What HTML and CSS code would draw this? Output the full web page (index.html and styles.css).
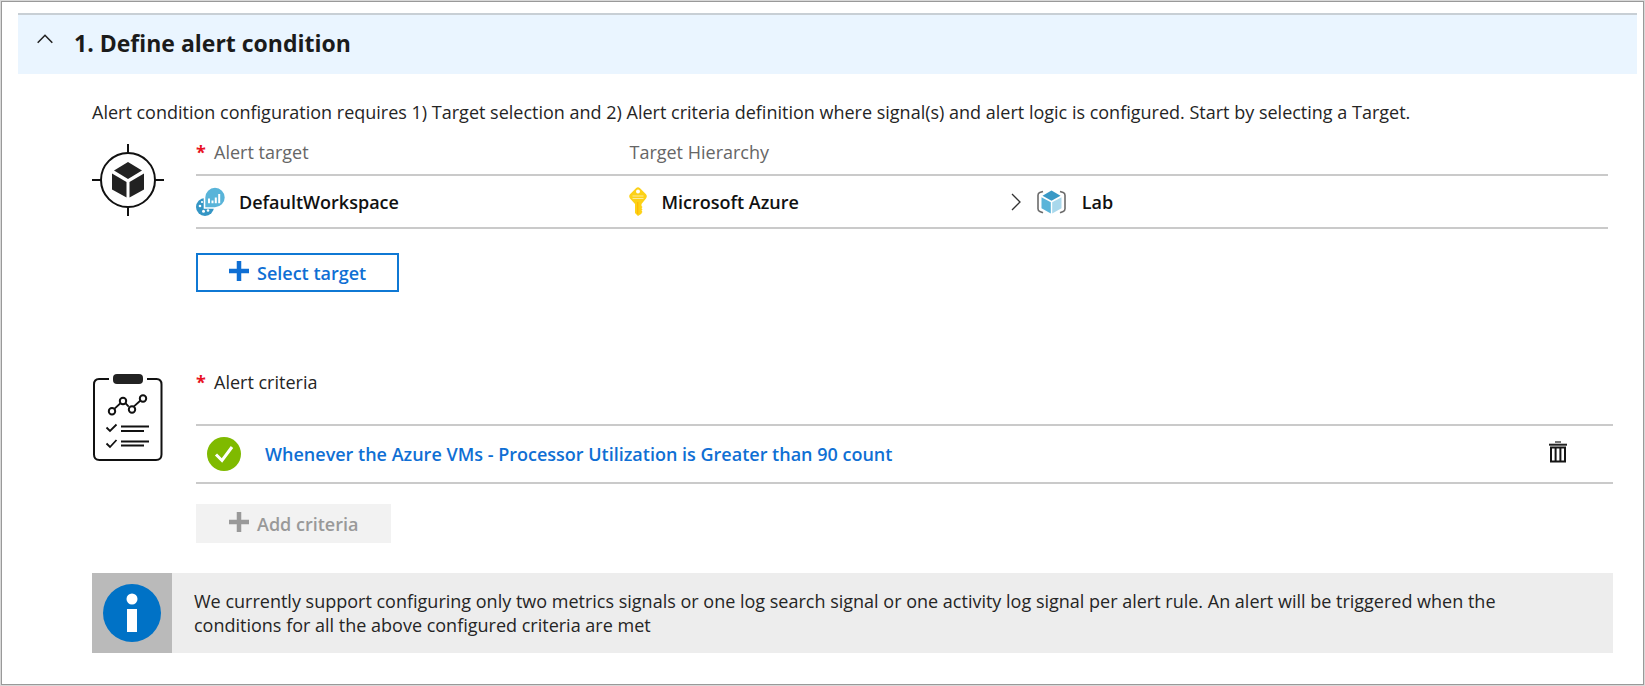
FILE: index.html
```
<!DOCTYPE html>
<html lang="en">
<head>
<meta charset="utf-8">
<title>Define alert condition</title>
<link rel="stylesheet" href="styles.css">
</head>
<body>
<main class="panel">
  <header class="step-header">
    <button class="toggle" type="button" aria-label="Collapse section" aria-expanded="true">
      <svg width="16" height="10" viewBox="0 0 16 10" fill="none" stroke="#222" stroke-width="1.6"><path d="M.7 8.8 8 1.3l7.3 7.5"/></svg>
    </button>
    <h1 class="step-title">1. Define alert condition</h1>
  </header>
  <div class="content">
    <p class="intro">Alert condition configuration requires 1) Target selection and 2) Alert criteria definition where signal(s) and alert logic is configured. Start by selecting a Target.</p>

    <section class="block">
      <svg class="block-icon" width="72" height="72" viewBox="0 0 72 72">
        <g fill="none" stroke="#111" stroke-width="2"><circle cx="36" cy="36" r="27"/><path d="M0 36h9M63 36h9M36 0v9M36 63v9"/></g>
        <g fill="#222"><path d="M36 18 50 26.5 36 35 22 26.5z"/><path d="M20 29.5 34.5 38v15.500L20 45.500z"/><path d="M52 29.500 37.500 38v15.500L52 45.500z"/></g>
      </svg>
      <div class="block-body target-body">
        <table class="target-table">
          <colgroup><col class="col-target"><col class="col-azure"><col></colgroup>
          <thead>
            <tr><th scope="col"><span class="required">*</span>Alert target</th><th scope="col" colspan="2">Target Hierarchy</th></tr>
          </thead>
          <tbody>
            <tr>
              <td>
                <div class="cell workspace">
                  <svg width="29" height="29" viewBox="0 0 29 29">
                    <circle cx="9" cy="20" r="9" fill="#3596c5"/>
                    <g fill="#fff"><circle cx="4" cy="19" r="1.300"/><circle cx="7.500" cy="24.300" r="1.500"/><circle cx="12" cy="23.500" r="1.300"/><circle cx="6" cy="15" r="1.100"/></g>
                    <path d="M8.500 21V10.500A10.500 10.500 0 1 1 19 21z" fill="#59b4d9" stroke="#fff" stroke-width="1.600"/>
                    <path d="M13 11.500v4.800M16.500 13.500v2.800M19.800 10.500v5.800M23.200 7v9.300" stroke="#fff" stroke-width="2"/>
                  </svg>
                  <span>DefaultWorkspace</span>
                </div>
              </td>
              <td>
                <div class="cell azure">
                  <svg width="18" height="29" viewBox="0 0 18 29">
                    <path d="M7.200 1Q9-.6 10.800 1L17 7.200Q18.600 9 17 11.500L12.500 17v2l1 1-1 1.200 1 1.200-1 1.200 1 1.300-1 1.200v.700L9 29 6 26V17L1 11.500Q-.6 9 1 7.200z" fill="#fcd116"/>
                    <circle cx="9" cy="4.500" r="2" fill="#fff"/><path d="M3.500 9h11M3.500 11.500h11" stroke="#fdeb9b" stroke-width="1"/><path d="M8.700 15v12" stroke="#ffb900" stroke-width="1.200"/>
                  </svg>
                  <span>Microsoft Azure</span>
                </div>
              </td>
              <td>
                <div class="cell lab">
                  <svg width="10" height="18" viewBox="0 0 10 18" fill="none" stroke="#333" stroke-width="1.300"><path d="M1 1l8 8-8 8"/></svg>
                  <svg width="29" height="24" viewBox="0 0 29 24">
                    <path d="M6 1.500 2.800 2.600Q1 3.300 1 5.300V18.700Q1 20.700 2.800 21.400L6 22.800M23 1.500l3.200 1.100Q28 3.300 28 5.300V18.700Q28 20.700 26.200 21.400L23 22.800" fill="none" stroke="#6b6b6b" stroke-width="1.600"/>
                    <path d="M14.500.5 23.500 5.700 14.500 10.800 5.500 5.700z" fill="#3999c6"/><path d="M4.500 7.200 13.800 12.300V23.500L4.500 18.300z" fill="#59b4d9"/><path d="M24.500 7.200 15.200 12.300V23.500L24.500 18.300z" fill="#a9d8ec"/>
                  </svg>
                  <span>Lab</span>
                </div>
              </td>
            </tr>
          </tbody>
        </table>
        <button class="action action-select" type="button">
          <svg class="plus" width="20" height="20" viewBox="0 0 20 20" stroke="currentColor" stroke-width="4.500"><path d="M10 0v20M0 10h20"/></svg>
          Select target
        </button>
      </div>
    </section>

    <section class="block criteria">
      <svg class="block-icon" width="72" height="90" viewBox="0 0 72 90" fill="none" stroke="#111" stroke-width="2">
        <path d="M17 5H7Q2 5 2 10.500v70q0 5.500 5.500 5.500h56.500Q69.500 86 69.500 80.500V10.500q0-5.500-5-5.500H55"/>
        <rect x="21" y="0" width="30" height="10" rx="4" fill="#222" stroke="none"/>
        <path d="M22.300 34.800 28.700 29M33.200 28.800 36.700 32.700M41.700 32.700 48.500 26.500" stroke-width="1.800"/>
        <circle cx="20" cy="37.300" r="3.200"/><circle cx="31" cy="27" r="3.200"/><circle cx="40" cy="35.500" r="3.200"/><circle cx="51" cy="24.500" r="3.200"/>
        <path d="M29 52.500h28M29 57h23M29 67.500h28M29 71.500h23"/>
        <path d="M14.500 53.500l3.500 3.500 6.500-6.500M14.500 69.500l3.500 3.500 6.500-7" stroke-width="1.800"/>
      </svg>
      <div class="block-body">
        <h2 class="criteria-title"><span class="required">*</span>Alert criteria</h2>
        <div class="criteria-row">
          <svg width="34" height="34" viewBox="0 0 34 34"><circle cx="17" cy="17" r="17" fill="#7fba00"/><path d="M9 17.500l6 6 10-13.500" fill="none" stroke="#fff" stroke-width="3"/></svg>
          <a class="criteria-link" href="#">Whenever the Azure VMs - Processor Utilization is Greater than 90 count</a>
          <button class="delete" type="button" aria-label="Delete criteria">
            <svg width="18" height="22" viewBox="0 0 18 22"><path d="M6 1h6" stroke="#777" stroke-width="2"/><path d="M0 3.700h18" stroke="#222" stroke-width="2"/><path d="M2 6.500h14v14H2zM6.600 6v15M11.400 6v15" fill="none" stroke="#151515" stroke-width="2"/></svg>
          </button>
        </div>
        <button class="action action-add" type="button" disabled>
          <svg class="plus" width="20" height="20" viewBox="0 0 20 20" stroke="currentColor" stroke-width="4.500"><path d="M10 0v20M0 10h20"/></svg>
          Add criteria
        </button>
      </div>
    </section>

    <aside class="notice">
      <div class="notice-icon">
        <svg width="58" height="58" viewBox="0 0 58 58"><circle cx="29" cy="29" r="29" fill="#0072c6"/><circle cx="29" cy="15" r="5.500" fill="#fff"/><path d="M24 25h10v23H24z" fill="#fff"/></svg>
      </div>
      <p class="notice-text">We currently support configuring only two metrics signals or one log search signal or one activity log signal per alert rule. An alert will be triggered when the conditions for all the above configured criteria are met</p>
    </aside>
  </div>
</main>
</body>
</html>
```
FILE: styles.css
```
* { box-sizing: border-box; }
body {
  margin: 0;
  padding: 1px;
  background: #fff;
  color: #252525;
  font-family: "Open Sans", "Noto Sans", sans-serif;
  font-size: 18px;
  line-height: 24px;
}
h1, h2, p { margin: 0; }
svg { display: block; flex: none; }
button { font: inherit; cursor: pointer; }
.panel {
  border: 1px solid #999;
  box-shadow: 0 0 0 1px #d8d8d8;
  padding: 11px 6px 31px 16px;
}
.step-header {
  display: flex;
  align-items: center;
  gap: 21px;
  height: 61px;
  padding: 0 19px 4px;
  border-top: 2px solid #c8cfd5;
  background: #eaf5ff;
}
.toggle {
  padding: 0 0 8px;
  border: 0;
  background: none;
}
.step-title {
  color: #1b1b1b;
  font-size: 23px;
  line-height: 32px;
  font-weight: 700;
}
.content { padding: 26px 24px 0 74px; }
.intro { margin-bottom: 16px; }
.block { display: flex; gap: 32px; }
.block-icon { margin-top: 4px; }
.block-body { flex: 1; min-width: 0; }
.target-body { padding-right: 5px; }
.target-table {
  width: 100%;
  border-collapse: collapse;
  table-layout: fixed;
}
.col-target { width: 30.7%; }
.col-azure { width: 27%; }
.target-table th {
  padding: 0 0 10px;
  color: #666;
  font-weight: 400;
  text-align: left;
}
.target-table td {
  height: 53px;
  padding: 0;
  border-top: 2px solid #cacaca;
  border-bottom: 2px solid #cacaca;
  color: #111;
  font-weight: 600;
}
.required {
  display: inline-block;
  width: 18px;
  color: #e81123;
  font-weight: 700;
}
.cell { display: flex; align-items: center; }
.workspace, .azure { gap: 14px; }
.lab { gap: 16px; }
.action {
  display: flex;
  align-items: center;
  gap: 8px;
  height: 39px;
  padding: 0 31px;
  border: 2px solid transparent;
  font-weight: 600;
}
.plus { margin-bottom: 4px; }
.action-select {
  margin-top: 24px;
  border-color: #0f78d4;
  background: #fff;
  color: #0f6fd4;
}
.action-add {
  margin-top: 20px;
  background: #f2f2f2;
  color: #999;
  cursor: default;
}
.criteria { margin-top: 78px; }
.criteria-title {
  font-size: 18px;
  line-height: 24px;
  font-weight: 400;
}
.criteria-row {
  display: flex;
  align-items: center;
  height: 60px;
  margin-top: 30px;
  padding: 0 46px 0 11px;
  border-top: 2px solid #cacaca;
  border-bottom: 2px solid #cacaca;
}
.criteria-link {
  margin-left: 24px;
  color: #0f6fd4;
  font-weight: 600;
  text-decoration: none;
}
.delete {
  margin-left: auto;
  padding: 0 0 4px;
  border: 0;
  background: none;
}
.notice {
  display: flex;
  min-height: 80px;
  margin-top: 30px;
  background: #ededed;
}
.notice-icon {
  display: flex;
  flex: none;
  align-items: center;
  justify-content: center;
  width: 80px;
  background: #bababa;
}
.notice-text {
  align-self: center;
  padding: 0 80px 0 22px;
}
```
